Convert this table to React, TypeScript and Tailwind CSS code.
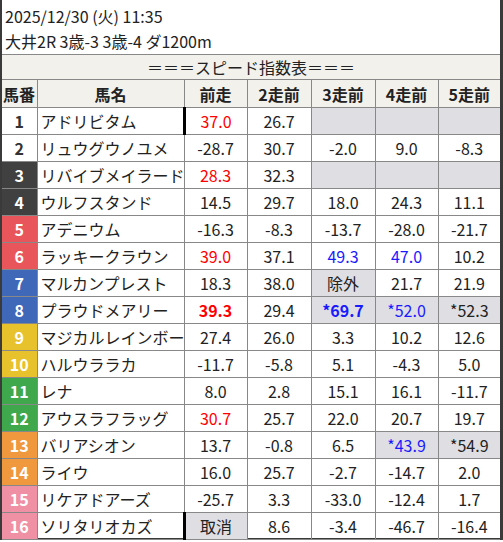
type Cell = { v: string; c?: 'r' | 'b'; bold?: boolean; gray?: boolean; mark?: boolean }

const G: Cell = { v: '', gray: true }

const waku: Record<number, string> = {
  1: 'bg-white text-[#333]',
  2: 'bg-white text-[#333]',
  3: 'bg-[#404040] text-white',
  4: 'bg-[#404040] text-white',
  5: 'bg-[#e8555a] text-white',
  6: 'bg-[#e8555a] text-white',
  7: 'bg-[#4068b8] text-white',
  8: 'bg-[#4068b8] text-white',
  9: 'bg-[#e8c22c] text-white',
  10: 'bg-[#e8c22c] text-white',
  11: 'bg-[#3fa84c] text-white',
  12: 'bg-[#3fa84c] text-white',
  13: 'bg-[#f0983e] text-white',
  14: 'bg-[#f0983e] text-white',
  15: 'bg-[#f090a4] text-white',
  16: 'bg-[#f090a4] text-white',
}

const n = (v: string, extra: Partial<Cell> = {}): Cell => ({ v, ...extra })

const rows: { no: number; name: string; cells: Cell[] }[] = [
  { no: 1, name: 'アドリビタム', cells: [n('37.0', { c: 'r', mark: true }), n('26.7'), G, G, G] },
  { no: 2, name: 'リュウグウノユメ', cells: [n('-28.7'), n('30.7'), n('-2.0'), n('9.0'), n('-8.3')] },
  { no: 3, name: 'リバイブメイラード', cells: [n('28.3', { c: 'r' }), n('32.3'), G, G, G] },
  { no: 4, name: 'ウルフスタンド', cells: [n('14.5'), n('29.7'), n('18.0'), n('24.3'), n('11.1')] },
  { no: 5, name: 'アデニウム', cells: [n('-16.3'), n('-8.3'), n('-13.7'), n('-28.0'), n('-21.7')] },
  { no: 6, name: 'ラッキークラウン', cells: [n('39.0', { c: 'r' }), n('37.1'), n('49.3', { c: 'b' }), n('47.0', { c: 'b' }), n('10.2')] },
  { no: 7, name: 'マルカンプレスト', cells: [n('18.3'), n('38.0'), n('除外', { gray: true }), n('21.7'), n('21.9')] },
  {
    no: 8,
    name: 'プラウドメアリー',
    cells: [
      n('39.3', { c: 'r', bold: true }),
      n('29.4'),
      n('*69.7', { c: 'b', bold: true, gray: true }),
      n('*52.0', { c: 'b', gray: true }),
      n('*52.3', { gray: true }),
    ],
  },
  { no: 9, name: 'マジカルレインボー', cells: [n('27.4'), n('26.0'), n('3.3'), n('10.2'), n('12.6')] },
  { no: 10, name: 'ハルウララカ', cells: [n('-11.7'), n('-5.8'), n('5.1'), n('-4.3'), n('5.0')] },
  { no: 11, name: 'レナ', cells: [n('8.0'), n('2.8'), n('15.1'), n('16.1'), n('-11.7')] },
  { no: 12, name: 'アウスラフラッグ', cells: [n('30.7', { c: 'r' }), n('25.7'), n('22.0'), n('20.7'), n('19.7')] },
  { no: 13, name: 'バリアシオン', cells: [n('13.7'), n('-0.8'), n('6.5'), n('*43.9', { c: 'b', gray: true }), n('*54.9', { gray: true })] },
  { no: 14, name: 'ライウ', cells: [n('16.0'), n('25.7'), n('-2.7'), n('-14.7'), n('2.0')] },
  { no: 15, name: 'リケアドアーズ', cells: [n('-25.7'), n('3.3'), n('-33.0'), n('-12.4'), n('1.7')] },
  { no: 16, name: 'ソリタリオカズ', cells: [n('取消', { gray: true, mark: true }), n('8.6'), n('-3.4'), n('-46.7'), n('-16.4')] },
]

export default function App() {
  return (
    <div className="w-[503px] h-[542px] bg-white text-[#222] font-['Noto_Sans_CJK_JP','Noto_Sans',sans-serif]">
      <div className="w-[503px] h-[540px] border-l-2 border-r-[3px] border-b-2 border-[#3a3a3a] flex flex-col">
        {/* Header */}
        <div className="h-[55px] pl-[3px] pt-[4px] text-[16px] leading-[25px]">
          <div>2025/12/30 (火) 11:35</div>
          <div>大井2R 3歳-3 3歳-4 ダ1200m</div>
        </div>

        {/* Title */}
        <div className="h-[26px] bg-[#f2f1ec] border-t border-[#888] flex items-center justify-center text-[16px]">
          ＝＝＝スピード指数表＝＝＝
        </div>

        <table className="border-collapse table-fixed w-[498px] text-[16px]">
          <colgroup>
            <col className="w-[35px]" />
            <col className="w-[147px]" />
            <col className="w-[63px]" />
            <col className="w-[64px]" />
            <col className="w-[64px]" />
            <col className="w-[63px]" />
            <col className="w-[62px]" />
          </colgroup>
          <thead>
            <tr className="h-[28px] bg-[#f2f1ec] font-bold">
              <th className="border border-l-0 border-[#888] text-left pl-[1px] p-0">馬番</th>
              <th className="border border-[#888] p-0">馬名</th>
              <th className="border border-[#888] p-0">前走</th>
              <th className="border border-[#888] p-0">2走前</th>
              <th className="border border-[#888] p-0">3走前</th>
              <th className="border border-[#888] p-0">4走前</th>
              <th className="border border-r-0 border-[#888] p-0">5走前</th>
            </tr>
          </thead>
          <tbody>
            {rows.map((r) => (
              <tr key={r.no} className="h-[27px]">
                <td className={`border border-l-0 border-[#888] p-0 text-center font-bold ${waku[r.no]}`}>{r.no}</td>
                <td className="border border-[#888] p-0 pl-[3px] whitespace-nowrap overflow-hidden">{r.name}</td>
                {r.cells.map((c, i) => (
                  <td
                    key={i}
                    className={[
                      'border border-[#888] p-0 text-center',
                      i === 4 ? 'border-r-0' : '',
                      c.gray ? 'bg-[#dedee3]' : '',
                      c.c === 'r' ? 'text-[#ff0000]' : c.c === 'b' ? 'text-[#1a1aff]' : '',
                      c.bold ? 'font-bold' : '',
                      c.mark ? 'border-l-[3px] border-l-black' : '',
                    ].join(' ')}
                  >
                    {c.v}
                  </td>
                ))}
              </tr>
            ))}
          </tbody>
        </table>
      </div>
    </div>
  )
}
